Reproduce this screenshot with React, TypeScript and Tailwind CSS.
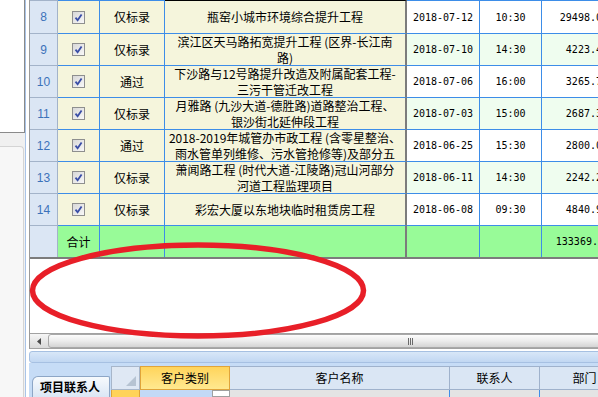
import React from "react";

type Row = {
  n: number;
  status: string;
  name: string[];
  date: string;
  time: string;
  amount: string;
};

const rows: Row[] = [
  { n: 8, status: "仅标录", name: ["瓶窑小城市环境综合提升工程"], date: "2018-07-12", time: "10:30", amount: "29498.00" },
  { n: 9, status: "仅标录", name: ["滨江区天马路拓宽提升工程 (区界-长江南", "路)"], date: "2018-07-10", time: "14:30", amount: "4223.40" },
  { n: 10, status: "通过", name: ["下沙路与12号路提升改造及附属配套工程-", "三污干管迁改工程"], date: "2018-07-06", time: "16:00", amount: "3265.70" },
  { n: 11, status: "仅标录", name: ["月雅路 (九沙大道-德胜路)道路整治工程、", "银沙街北延伸段工程"], date: "2018-07-03", time: "15:00", amount: "2687.30" },
  { n: 12, status: "通过", name: ["2018-2019年城管办市政工程 (含零星整治、", "雨水管单列维修、污水管抢修等)及部分五"], date: "2018-06-25", time: "15:30", amount: "2800.00" },
  { n: 13, status: "仅标录", name: ["萧闻路工程 (时代大道-江陵路)冠山河部分", "河道工程监理项目"], date: "2018-06-11", time: "14:30", amount: "2242.20" },
  { n: 14, status: "仅标录", name: ["彩宏大厦以东地块临时租赁房工程"], date: "2018-06-08", time: "09:30", amount: "4840.90" },
];

const mono = "font-[family-name:'DejaVu_Sans_Mono',monospace] text-[10px]";
const blueCell = "shrink-0 flex items-center border-b border-r border-[#3d8de8]";

const CheckBox = () => (
  <span className="flex h-[13px] w-[13px] items-center justify-center border border-[#8e8f8f] bg-gradient-to-br from-[#d8d8d8] to-[#f8f8f8]">
    <svg width="9" height="9" viewBox="0 0 9 9">
      <path d="M1.5 4.6 L3.6 7.2 L7.6 1.4" stroke="#3a4ea6" strokeWidth="1.8" fill="none" />
    </svg>
  </span>
);

const GridRow = ({ row, idx }: { row: Row; idx: number }) => {
  const first = idx === 0;
  const h = first ? "h-[34px] border-t" : "h-[32px]";
  const side = idx % 2 === 0 ? "bg-white" : "bg-[#effdef]";
  return (
    <div className="flex">
      <div className={`${h} w-[28px] shrink-0 flex items-center justify-center border-b border-r border-[#a3b3c9] bg-[#dbe6f4] font-['Liberation_Sans',sans-serif] text-[12px] text-[#3b72ba]`}>
        {row.n}
      </div>
      <div className={`${h} ${blueCell} w-[42px] justify-center bg-[#f5f5dc]`}>
        <CheckBox />
      </div>
      <div className={`${h} ${blueCell} w-[65px] justify-center bg-[#f5f5dc] text-[12px]`}>
        {row.status}
      </div>
      <div className={`${h} shrink-0 flex w-[242px] flex-col items-center justify-center overflow-hidden border-b border-r-2 border-b-[#3d8de8] border-r-[#7c7c7c] bg-[#f5f5dc] text-[12px] leading-[16px]`}>
        {row.name.map((line) => (
          <div key={line} className="whitespace-nowrap">
            {line}
          </div>
        ))}
      </div>
      <div className={`${h} ${blueCell} ${side} ${mono} w-[73px] justify-center`}>{row.date}</div>
      <div className={`${h} ${blueCell} ${side} ${mono} w-[62px] justify-center`}>{row.time}</div>
      <div className={`${h} ${blueCell} ${side} ${mono} w-[72px] justify-end pr-[5px]`}>{row.amount}</div>
    </div>
  );
};

const TotalRow = () => (
  <div className="flex h-[31px]">
    <div className="w-[28px] shrink-0 border-r border-[#a3b3c9] bg-[#dbe6f4]" />
    <div className="w-[42px] shrink-0 flex items-center justify-center border-r border-[#3d8de8] bg-[#98fb98] text-[12px]">
      合计
    </div>
    <div className="w-[65px] shrink-0 border-r border-[#3d8de8] bg-[#98fb98]" />
    <div className="w-[242px] shrink-0 border-r-2 border-[#7c7c7c] bg-[#98fb98]" />
    <div className="w-[73px] shrink-0 border-r border-[#3d8de8] bg-[#98fb98]" />
    <div className="w-[62px] shrink-0 border-r border-[#3d8de8] bg-[#98fb98]" />
    <div className={`w-[72px] shrink-0 flex items-center justify-end pr-[4px] bg-[#98fb98] ${mono}`}>133369.00</div>
  </div>
);

const ScrollBar = () => (
  <div className="flex h-[16px] border-y border-[#a2a2a2] bg-gradient-to-b from-[#f6f6f6] to-[#d9d9d9]">
    <div className="w-[18px] shrink-0 flex items-center justify-center">
      <svg width="4" height="7" viewBox="0 0 4 7">
        <path d="M4 0 L0 3.5 L4 7 Z" fill="#4a4a4a" />
      </svg>
    </div>
    <div className="w-[724px] shrink-0 flex items-center justify-center rounded-l-[3px] border border-[#a8a8a8] bg-gradient-to-b from-[#fcfcfc] via-[#ececec] to-[#d4d4d4]">
      <div className="flex gap-[1px]">
        <span className="h-[7px] w-[1px] bg-[#6a6a6a]" />
        <span className="h-[7px] w-[1px] bg-[#6a6a6a]" />
        <span className="h-[7px] w-[1px] bg-[#6a6a6a]" />
      </div>
    </div>
  </div>
);

const ContactPanel = () => (
  <div className="flex h-[34px] bg-[#c6dcf6]">
    <div className="w-[82px] shrink-0 pl-[3px] pt-[13px]">
      <div className="flex h-[21px] w-[78px] items-center rounded-tl-[6px] rounded-tr-[2px] border border-b-0 border-[#8da6c6] bg-gradient-to-b from-[#f7fafd] to-[#dbe7f5] pl-[7px] text-[12px] font-bold">
        项目联系人
      </div>
    </div>
    <div className="flex flex-col pt-[3px]">
      <div className="flex h-[26px]">
        <div className="relative w-[29px] shrink-0 border border-[#a7b6ca] bg-[#dfe8f4]">
          <svg className="absolute bottom-[3px] right-[3px]" width="10" height="10" viewBox="0 0 10 10">
            <path d="M10 0 L10 10 L0 10 Z" fill="#b6c3d2" />
          </svg>
        </div>
        <div className="w-[90px] shrink-0 flex items-center justify-center border border-[#e0a43a] bg-gradient-to-b from-[#ffd45a] to-[#ffe98f] text-[12px]">
          客户类别
        </div>
        <div className="w-[220px] shrink-0 flex items-center justify-center border-y border-r border-[#9fb2cc] bg-[#dae6f4] text-[12px]">
          客户名称
        </div>
        <div className="w-[90px] shrink-0 flex items-center justify-center border-y border-r border-[#9fb2cc] bg-[#dae6f4] text-[12px]">
          联系人
        </div>
        <div className="w-[90px] shrink-0 flex items-center justify-center border-y border-r border-[#9fb2cc] bg-[#dae6f4] text-[12px]">
          部门
        </div>
      </div>
      <div className="flex h-[8px]">
        <div className="w-[29px] shrink-0 bg-[#ffd35a] border-x border-[#e0a43a]" />
        <div className="w-[72px] shrink-0 bg-[#c3d9f6]" />
        <div className="w-[18px] shrink-0 border border-[#a0a0a0] bg-white" />
        <div className="w-[220px] shrink-0 border-r border-[#3d8de8] bg-[#e4e4e4]" />
        <div className="w-[90px] shrink-0 border-r border-[#3d8de8] bg-[#e4e4e4]" />
        <div className="w-[90px] shrink-0 bg-[#e4e4e4]" />
      </div>
    </div>
  </div>
);

export default function App() {
  return (
    <div className="relative flex h-[397px] w-[598px] overflow-hidden bg-white font-[family-name:'Noto_Sans_CJK_SC',sans-serif] text-black">
      {/* left tree panel */}
      <div className="flex w-[25px] shrink-0 flex-col">
        <div className="h-[133px] border-b border-r border-[#8a8a8a] bg-white" />
        <div className="flex-1 bg-[#f0f0f0] pt-[13px] pr-[1px]">
          <div className="h-full rounded-tr-[4px] border-r border-t border-[#d4d4d4] bg-[#f7f7f7]" />
        </div>
      </div>

      <div className="flex min-w-0 flex-1 flex-col border-l border-[#a9c4e8] pl-[3px]">
        <div className="flex flex-col border-l border-[#9a9a9a]">
          <div className="flex flex-col border-b-2 border-[#7c7c7c]">
            {rows.map((row, idx) => (
              <GridRow key={row.n} row={row} idx={idx} />
            ))}
            <TotalRow />
          </div>
          <div className="h-[74px] bg-white" />
          <ScrollBar />
        </div>
        <div className="h-[2px] bg-white" />
        <div className="mr-[-10px] h-[12px] rounded-[3px] border border-[#a6c0e2] bg-gradient-to-b from-[#d8e7f8] to-[#c1d7f2]" />
        <ContactPanel />
      </div>

      {/* red annotation */}
      <svg className="pointer-events-none absolute left-0 top-0" width="598" height="397" viewBox="0 0 598 397">
        <ellipse cx="198" cy="290.5" rx="165.5" ry="45.5" fill="none" stroke="#e81f28" strokeWidth="5.5" />
      </svg>
    </div>
  );
}
